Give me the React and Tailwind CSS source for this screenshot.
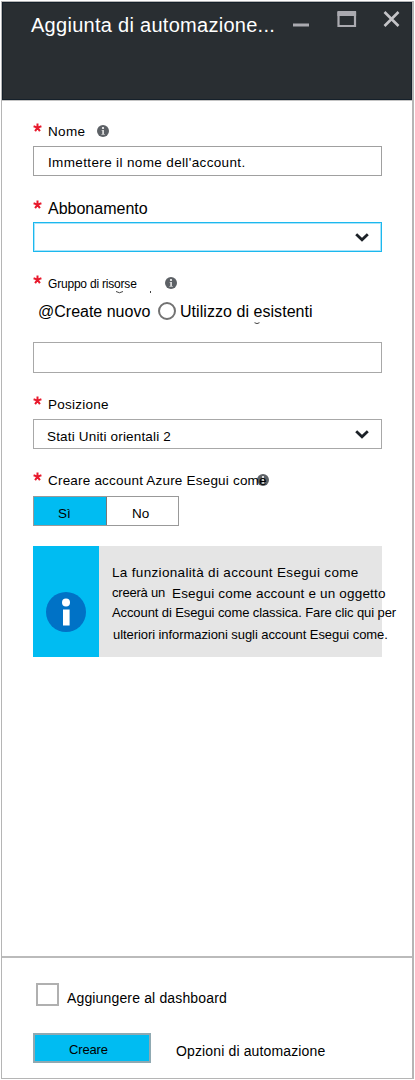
function InfoDot({ className = '' }) {
  return (
    <svg viewBox="0 0 12 12" className={`size-3 shrink-0 ${className}`}>
      <circle cx="6" cy="6" r="6" fill="#5d6166" />
      <circle cx="6" cy="3" r="1.1" fill="#fff" />
      <path d="M4.6 5H7v4h.8v.8H4.4V9h.8V5.8h-.6z" fill="#d8d8d8" />
    </svg>
  );
}

function Star() {
  return (
    <svg viewBox="0 0 9 9" className="h-[9px] w-[9px] shrink-0" stroke="#e8192c" strokeWidth="2" fill="none">
      <path d="M4.5 4.6V.5M4.5 4.6L.6 3.3M4.5 4.6L8.4 3.3M4.5 4.6L2.1 8.1M4.5 4.6L6.9 8.1" />
    </svg>
  );
}

function Chevron() {
  return (
    <svg viewBox="0 0 14 9" className="h-[9px] w-[14px]" fill="none" stroke="#1c2127" strokeWidth="2.8">
      <path d="M1.2 1.3L7 6.8L12.8 1.3" />
    </svg>
  );
}

function Label({ children, className = '' }) {
  return (
    <div className="flex h-5 items-start">
      <div className="pt-px">
        <Star />
      </div>
      <span className={`ml-[6px] ${className}`}>{children}</span>
    </div>
  );
}

export default function App() {
  return (
    <div className="h-[1080px] w-[415px] bg-white pl-px pt-px font-['Liberation_Sans',Arial,sans-serif] text-[13.5px] leading-5 whitespace-nowrap text-black">
      <div className="flex h-[1078px] w-[413px] flex-col border border-r-2 border-[#b5b5b5]">
        <header className="flex h-[98px] shrink-0 items-start border border-[#15202a] bg-[#292e32] pl-[28px]">
          <h1 className="mt-[10px] w-[262px] text-[20px] leading-6 tracking-[0.28px] text-white">Aggiunta di automazione...</h1>
          <svg viewBox="0 0 110 20" className="mt-[5px] h-5 w-[110px]" fill="none" stroke="#aaaab0">
            <path d="M0 17H16" strokeWidth="3" />
            <path d="M45.5 4V18H62V4" strokeWidth="2.2" />
            <path d="M44.4 5.5H63.1" strokeWidth="5" />
            <path d="M91.5 4L105.5 18M105.5 4L91.5 18" strokeWidth="2.6" stroke="#c4c4c8" />
          </svg>
        </header>

        <main className="flex grow flex-col border-t border-[#c4c4c4] pl-[31px]">
          <div className="mt-[21px] flex">
            <Label className="tracking-[0.35px]">Nome</Label>
            <InfoDot className="ml-[12px] mt-[3px]" />
          </div>
          <div className="mt-1 h-[30px] w-[349px] border border-[#a0a0a0] pl-[14px] pt-[6px] tracking-[0.36px]">Immettere il nome dell'account.</div>

          <div className="mt-[23px]">
            <Label className="text-[16px]">Abbonamento</Label>
          </div>
          <div className="mt-[3px] flex h-[30px] w-[349px] items-center justify-end border border-[#1cb8ee] pr-[12px] shadow-[inset_0_0_0_1px_#a9e4fa]">
            <Chevron />
          </div>

          <div className="relative mt-[22px] flex">
            <Label className="text-[12px] tracking-[-0.2px]">Gruppo di risorse</Label>
            <svg viewBox="0 0 40 4" className="absolute left-[82px] top-[17px] h-1 w-10" fill="none" stroke="#444">
              <path d="M1 .5Q4.500 3 8 .5M35.500 0V2" />
            </svg>
            <InfoDot className="absolute left-[132px] top-[3px]" />
          </div>
          <div className="relative mt-2 flex pl-[5px] text-[16px]">
            <span className="w-[120px]">@Create nuovo</span>
            <span className="size-[18px] rounded-full border-2 border-[#727272]" />
            <span className="ml-[4px] tracking-[0.05px]">Utilizzo di esistenti</span>
            <svg viewBox="0 0 8 3" className="absolute left-[220px] top-5 h-[3px] w-2" fill="none" stroke="#444">
              <path d="M1.500 .7Q4 2.500 6.500 .7" />
            </svg>
          </div>
          <div className="mt-5 h-[31px] w-[349px] border border-[#a8a8a8]" />

          <div className="mt-[22px]">
            <Label className="tracking-[0.25px]">Posizione</Label>
          </div>
          <div className="mt-1 flex h-[30px] w-[349px] items-center justify-between border border-[#a8a8a8] pl-[13px] pr-[12px]">
            <span className="pt-[6px] tracking-[0.17px]">Stati Uniti orientali 2</span>
            <Chevron />
          </div>

          <div className="mt-[22px] flex">
            <Label className="relative z-10 tracking-[0.2px]">Creare account Azure Esegui come</Label>
            <InfoDot className="-ml-[10px] mt-[3px]" />
          </div>
          <div className="mt-[5px] flex h-[30px] w-[146px] border border-[#999]">
            <div className="w-[73px] border-r border-[#777] bg-[#00bcf2] pl-[24px] pt-[7px]">Sì</div>
            <div className="pl-[25px] pt-[7px]">No</div>
          </div>

          <div className="mt-5 flex h-[111px] w-[349px] bg-[#e5e5e5]">
            <div className="flex w-[66px] shrink-0 items-start justify-center bg-[#00bcf2] pt-[46px]">
              <svg viewBox="0 0 40 40" className="size-10">
                <circle cx="20" cy="20" r="20" fill="#0072c6" />
                <circle cx="20" cy="10.5" r="4" fill="#fff" />
                <path d="M17 17.5h6.6v16H17z" fill="#fff" />
              </svg>
            </div>
            <div className="pl-[13px] pt-[17px] text-[13px]">
              <p className="text-[13.5px] tracking-[0.33px]">La funzionalità di account Esegui come</p>
              <p className="flex">
                <span className="w-[60px] tracking-[-0.2px]">creerà un</span>
                <span className="pt-px text-[13.5px] tracking-[0.18px]">Esegui come account e un oggetto</span>
              </p>
              <p className="-mt-px tracking-[-0.1px]">Account di Esegui come classica. Fare clic qui per</p>
              <p className="mt-[2px] pl-px tracking-[-0.07px]">ulteriori informazioni sugli account Esegui come.</p>
            </div>
          </div>
        </main>

        <footer className="flex h-[122px] shrink-0 flex-col border-t-2 border-[#bbb] pl-[31px]">
          <div className="mt-[25px] flex pl-[3px]">
            <span className="size-[23px] border-2 border-[#b0b0b0]" />
            <span className="ml-[8px] mt-[5px] text-[14px] tracking-[0.15px]">Aggiungere al dashboard</span>
          </div>
          <div className="mt-[25px] flex">
            <button className="h-[30px] w-[118px] border-2 border-[#8fa9b2] bg-[#00bcf2] pl-[34px] pt-[4px] text-left text-[13px] tracking-[-0.15px]">Creare</button>
            <span className="ml-[25px] mt-[8px] text-[14px] tracking-[0.14px]">Opzioni di automazione</span>
          </div>
        </footer>
      </div>
    </div>
  );
}
